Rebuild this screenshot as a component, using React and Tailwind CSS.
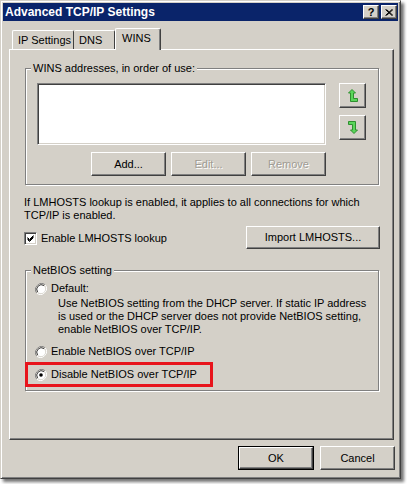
import React from "react";

const raised =
  "bg-[#d4d0c8] border border-t-white border-l-white border-r-[#404040] border-b-[#404040] shadow-[inset_-1px_-1px_0_#808080]";

const Btn = ({ children, disabled, w = "w-[75px]", h = "h-[24px]", extra = "" }) => (
  <div
    className={`${raised} ${w} ${h} ${extra} flex items-center justify-center ${
      disabled ? "text-[#a09c94] [text-shadow:1px_1px_0_#fff]" : "text-black"
    }`}
  >
    {children}
  </div>
);

const Radio = ({ checked }) => (
  <svg width="12" height="12" viewBox="0 0 12 12" className="shrink-0">
    <path d="M10.2 1.8A6 6 0 0 0 1.8 10.2" stroke="#808080" strokeWidth="1" fill="none" />
    <path d="M1.8 10.2A6 6 0 0 0 10.2 1.8" stroke="#ffffff" strokeWidth="1" fill="none" />
    <circle cx="6" cy="6" r="4.6" fill="#fff" stroke="#d4d0c8" strokeWidth="0.6" />
    <path d="M9 2.6A4.6 4.6 0 0 0 2.6 9" stroke="#404040" strokeWidth="1" fill="none" />
    {checked && <circle cx="6" cy="6" r="1.8" fill="#000" />}
  </svg>
);

const Checkbox = () => (
  <div className="w-[13px] h-[13px] shrink-0 bg-white border border-t-[#808080] border-l-[#808080] border-r-white border-b-white shadow-[inset_1px_1px_0_#404040,inset_-1px_-1px_0_#d4d0c8] flex items-center justify-center">
    <svg width="9" height="9" viewBox="0 0 9 9">
      <path d="M1.5 3.5 L3.5 5.5 L7.5 1.5 M1.5 4.5 L3.5 6.5 L7.5 2.5 M1.5 5.5 L3.5 7.5 L7.5 3.5" stroke="#000" strokeWidth="1" fill="none" />
    </svg>
  </div>
);

const UpIcon = () => (
  <svg width="10" height="13" viewBox="0 0 10 13">
    <path d="M4 0.5 L7.5 4 L5.5 4 L5.5 9.5 L9.5 9.5 L9.5 12.5 L2.5 12.5 L2.5 4 L0.5 4 Z" fill="#5ad65a" stroke="#2f8f2f" strokeWidth="1" strokeLinejoin="round" />
  </svg>
);

const DownIcon = () => (
  <svg width="10" height="13" viewBox="0 0 10 13">
    <path d="M0.5 0.5 L7.5 0.5 L7.5 9 L9.5 9 L6 12.5 L2.5 9 L4.5 9 L4.5 3.5 L0.5 3.5 Z" fill="#5ad65a" stroke="#2f8f2f" strokeWidth="1" strokeLinejoin="round" />
  </svg>
);

const Group = ({ label, children, extra = "" }) => (
  <div className={`relative border border-[#808080] shadow-[inset_1px_1px_0_#fff,1px_1px_0_#fff] ${extra}`}>
    <span className="absolute -top-[7px] left-[5px] bg-[#d4d0c8] px-[2px] leading-[13px]">
      {label}
    </span>
    {children}
  </div>
);

export default function App() {
  return (
    <div className="w-[407px] h-[484px] bg-white font-['Liberation_Sans',sans-serif] text-[11px] leading-[13px] text-black">
      <div className="w-[401px] h-[479px] bg-[#d4d0c8] border border-t-[#d4d0c8] border-l-[#d4d0c8] border-r-[#404040] border-b-[#404040] shadow-[inset_1px_1px_0_#fff,inset_-1px_-1px_0_#808080,3px_3px_3px_rgba(0,0,0,0.55)] p-[2px] flex flex-col">
        {/* title bar */}
        <div className="h-[18px] bg-[#0a246a] flex items-center justify-between pl-[2px] pr-[1px]">
          <span className="text-white font-bold text-[12px]">Advanced TCP/IP Settings</span>
          <div className="flex gap-[2px]">
            <div className={`${raised} w-[16px] h-[14px] flex items-center justify-center font-bold text-[11px] leading-none`}>?</div>
            <div className={`${raised} w-[16px] h-[14px] flex items-center justify-center`}>
              <svg width="8" height="7" viewBox="0 0 8 7">
                <path d="M0.5 0.5 L7 6.5 M1.5 0.5 L8 6.5 M7 0.5 L0.5 6.5 M8 0.5 L1.5 6.5" stroke="#000" strokeWidth="1" />
              </svg>
            </div>
          </div>
        </div>

        {/* tabs */}
        <div className="ml-[6px] mt-[7px] flex items-end h-[21px] whitespace-nowrap">
          <div className="h-[19px] pl-[5px] ml-[3px] border-t border-l border-white border-r border-r-[#404040] rounded-t-[2px] flex items-center w-[62px] shrink-0">
            IP Settings
          </div>
          <div className="h-[19px] pl-[5px] border-t border-white border-r border-r-[#404040] rounded-t-[2px] flex items-center w-[41px] shrink-0">
            DNS
          </div>
          <div className="relative z-10 h-[22px] -mb-[1px] pl-[6px] bg-[#d4d0c8] border-t border-l border-white border-r border-r-[#404040] shadow-[inset_-1px_0_0_#808080] rounded-t-[2px] flex items-start pt-[3px] w-[46px] shrink-0">
            WINS
          </div>
        </div>

        {/* panel */}
        <div className="ml-[6px] w-[385px] h-[391px] border border-t-white border-l-white border-r-[#404040] border-b-[#404040] shadow-[inset_-1px_-1px_0_#808080] pt-[18px] pl-[15px] flex flex-col">
          <Group label="WINS addresses, in order of use:" extra="w-[354px] h-[117px] pt-[14px] pl-[11px]">
            <div className="flex gap-[13px]">
              <div className="flex flex-col">
                <div className="w-[289px] h-[62px] bg-white border border-t-[#808080] border-l-[#808080] border-r-white border-b-white shadow-[inset_1px_1px_0_#404040,inset_-1px_-1px_0_#d4d0c8]" />
                <div className="flex justify-end gap-[5px] mt-[7px]">
                  <Btn>Add...</Btn>
                  <Btn disabled>Edit...</Btn>
                  <Btn disabled>Remove</Btn>
                </div>
              </div>
              <div className="flex flex-col gap-[7px]">
                <Btn w="w-[27px]" h="h-[25px]"><UpIcon /></Btn>
                <Btn w="w-[27px]" h="h-[25px]"><DownIcon /></Btn>
              </div>
            </div>
          </Group>

          <div className="-ml-[1px] mt-[11px]">
            <p>If LMHOSTS lookup is enabled, it applies to all connections for which</p>
            <p>TCP/IP is enabled.</p>
          </div>

          <div className="-ml-[1px] mt-[4px] w-[356px] flex items-center justify-between">
            <div className="flex items-center gap-[4px] mt-[2px]">
              <Checkbox />
              <span>Enable LMHOSTS lookup</span>
            </div>
            <Btn w="w-[134px]" h="h-[23px]">Import LMHOSTS...</Btn>
          </div>

          <Group label="NetBIOS setting" extra="mt-[21px] w-[354px] h-[121px] pt-[11px] pl-[9px]">
            <div className="flex items-center gap-[4px]">
              <Radio />
              <span>Default:</span>
            </div>
            <div className="ml-[23px] mt-[2px]">
              <p>Use NetBIOS setting from the DHCP server. If static IP address</p>
              <p>is used or the DHCP server does not provide NetBIOS setting,</p>
              <p>enable NetBIOS over TCP/IP.</p>
            </div>
            <div className="flex items-center gap-[4px] mt-[9px]">
              <Radio />
              <span>Enable NetBIOS over TCP/IP</span>
            </div>
            <div className="-ml-[10px] mt-[4px] w-[188px] h-[25px] border-[3px] border-[#e8141c] flex items-center gap-[4px] pl-[7px]">
              <Radio checked />
              <span>Disable NetBIOS over TCP/IP</span>
            </div>
          </Group>
        </div>

        {/* footer buttons */}
        <div className="mt-[6px] ml-[235px] flex gap-[6px]">
          <div className="border border-black">
            <Btn w="w-[74px]" h="h-[22px]">OK</Btn>
          </div>
          <Btn w="w-[75px]" h="h-[24px]">Cancel</Btn>
        </div>
      </div>
    </div>
  );
}
